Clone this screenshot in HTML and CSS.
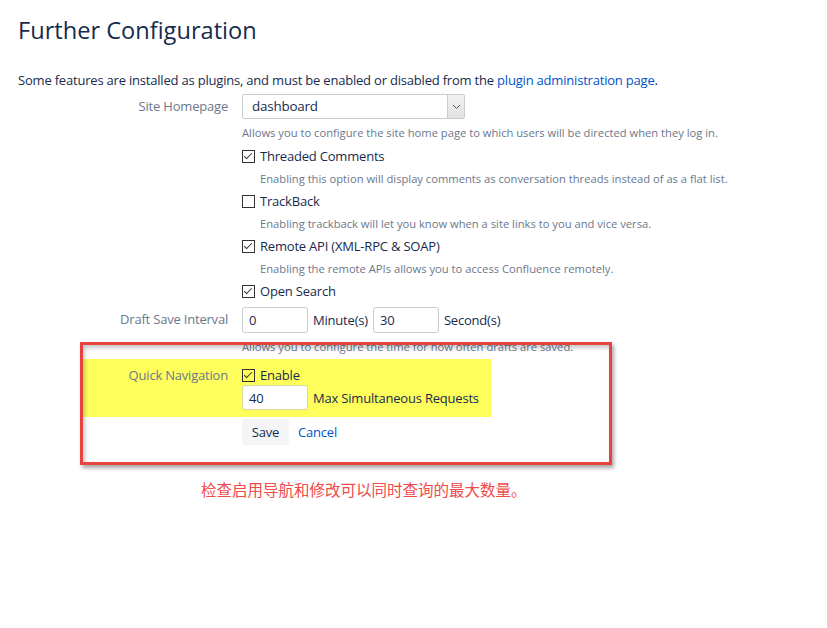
FILE: index.html
```html
<!DOCTYPE html>
<html>
<head>
<meta charset="utf-8">
<title>Further Configuration</title>
<link rel="stylesheet" href="styles.css">
</head>
<body>
<div class="page">
  <h1>Further Configuration</h1>
  <p class="intro">Some features are installed as plugins, and must be enabled or disabled from the <a href="#">plugin administration page</a>.</p>

  <form class="config">
    <div class="group">
      <label class="label label-tall">Site Homepage</label>
      <div class="field">
        <div class="select">
          <span class="select-value">dashboard</span>
          <span class="select-arrow">
            <svg width="9" height="6" viewBox="0 0 9 6"><path d="M1 1l3.5 3.5L8 1" fill="none" stroke="#555" stroke-width="1"/></svg>
          </span>
        </div>
        <div class="desc">Allows you to configure the site home page to which users will be directed when they log in.</div>

        <div class="check"><span class="box on"></span>Threaded Comments</div>
        <div class="desc sub">Enabling this option will display comments as conversation threads instead of as a flat list.</div>

        <div class="check"><span class="box"></span>TrackBack</div>
        <div class="desc sub">Enabling trackback will let you know when a site links to you and vice versa.</div>

        <div class="check"><span class="box on"></span>Remote API (XML-RPC &amp; SOAP)</div>
        <div class="desc sub">Enabling the remote APIs allows you to access Confluence remotely.</div>

        <div class="check"><span class="box on"></span>Open Search</div>
      </div>
    </div>

    <div class="group draft">
      <label class="label label-tall">Draft Save Interval</label>
      <div class="field">
        <div class="inline">
          <span class="text-input">0</span><span class="unit">Minute(s)</span>
          <span class="text-input">30</span><span class="unit">Second(s)</span>
        </div>
        <div class="desc">Allows you to configure the time for how often drafts are saved.</div>
      </div>
    </div>

    <div class="group marked">
      <label class="label">Quick Navigation</label>
      <div class="field">
        <div class="check"><span class="box on"></span>Enable</div>
        <div class="inline">
          <span class="text-input">40</span><span class="unit">Max Simultaneous Requests</span>
        </div>
      </div>
    </div>

    <div class="group buttons">
      <span class="label"></span>
      <div class="actions">
        <span class="button">Save</span><a class="cancel" href="#">Cancel</a>
      </div>
    </div>

    <div class="callout"></div>
  </form>

  <p class="note">检查启用导航和修改可以同时查询的最大数量。</p>
</div>
</body>
</html>
```

FILE: styles.css
```css
body { margin:0; background:#fff; color:#172b4d; font-family:"Open Sans", "Noto Sans", sans-serif; font-size:13px; letter-spacing:-0.2px; }
a { color:#0052cc; text-decoration:none; }

.page { padding:0 18px; }

h1 { margin:0; padding-top:14px; font-size:23.6px; font-weight:400; line-height:32px; color:#172b4d; letter-spacing:0; }
.intro { margin:24px 0 0; line-height:20px; }

/* form: label column on the left, fields beside it */
.config { position:relative; margin:4px 0 0 -18px; padding-left:82px; }
.group { display:grid; grid-template-columns:146px auto; column-gap:14px; }
.label { text-align:right; color:#6b778c; line-height:20px; }
.label-tall { line-height:25px; }
.field { display:flex; flex-direction:column; align-items:flex-start; }

.select { display:flex; box-sizing:border-box; width:223px; height:25px; border:1px solid #c8cbd0; border-radius:2px; background:#fff; }
.select-value { flex:1; padding-left:9px; line-height:23px; font-size:13.4px; }
.select-arrow { width:16px; display:flex; align-items:center; justify-content:center; border-left:1px solid #c8cbd0; background:linear-gradient(#f2f2f2,#e2e2e2); }

.desc { margin-top:6px; line-height:16px; font-size:11.2px; color:#6b778c; letter-spacing:0; }
.desc.sub { margin-left:18px; margin-top:5px; }
.check { display:flex; align-items:center; line-height:20px; margin-top:5px; }
.desc.sub + .check { margin-top:4px; }
.box { width:11px; height:11px; border:1px solid #333; margin-right:5px; position:relative; }
.box.on::after { content:""; position:absolute; left:3px; top:0; width:3px; height:7px; border:solid #333; border-width:0 1.3px 1.3px 0; transform:rotate(45deg); }

.draft { margin-top:6px; }
.draft .desc { margin-top:6px; }
.inline { display:flex; align-items:center; white-space:nowrap; }
.text-input { box-sizing:border-box; width:66px; height:26px; padding-left:6px; border:1px solid #c8cbd0; border-radius:3px; line-height:24px; background:#fff; }
.unit { margin:0 5px; }

/* highlighted row */
.marked { width:409px; margin-top:4px; padding:6px 0 7px; background:#ffff5c; }
.marked .check { margin-top:0; }
.marked .text-input { height:25px; border-color:#d9d7a0; }

.buttons { margin-top:2px; }
.actions { display:flex; align-items:center; }
.button { display:inline-block; width:47px; height:26px; line-height:26px; text-align:center; background:#f4f5f7; border-radius:3px; }
.cancel { margin-left:9px; }

/* red frame drawn over the quick navigation settings */
.callout { position:absolute; left:80px; top:248px; width:526px; height:117px; border:3px solid #e84340; box-shadow:2px 3px 4px rgba(0,0,0,.35), inset 2px 3px 4px rgba(0,0,0,.22); pointer-events:none; }

.note { margin:34px 0 0 183px; line-height:20px; font-size:15.5px; color:#f04a4a; font-family:"Noto Sans CJK SC", sans-serif; letter-spacing:0; }
```
